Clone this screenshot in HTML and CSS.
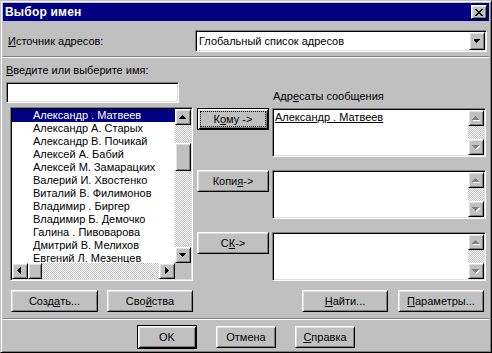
FILE: index.html
```html
<!DOCTYPE html>
<html lang="ru">
<head>
<meta charset="utf-8">
<title>Выбор имен</title>
<link rel="stylesheet" href="styles.css">
</head>
<body>
<div class="window">
  <div class="titlebar">
    <span class="title">Выбор имен</span>
    <div class="close raised">
      <svg width="8" height="7" viewBox="0 0 8 7" shape-rendering="crispEdges"><path fill="#000" d="M0 0h2v1H0zM6 0h2v1H6zM1 1h2v1H1zM5 1h2v1H5zM2 2h4v1H2zM3 3h2v1H3zM2 4h4v1H2zM1 5h2v1H1zM5 5h2v1H5zM0 6h2v1H0zM6 6h2v1H6z"/></svg>
    </div>
  </div>
  <div class="body">
    <div class="source-row">
      <span class="lbl"><u>И</u>сточник адресов:</span>
      <div class="combo sunken">
        <span class="combo-text">Глобальный список адресов</span>
        <div class="combo-btn raised">
          <svg width="16" height="16" viewBox="0 0 16 16" shape-rendering="crispEdges"><path fill="#000" d="M4 6H11V7H10V8H9V9H8V10H7V9H6V8H5V7H4z"/></svg>
        </div>
      </div>
    </div>
    <div class="sep"></div>
    <div class="main">
      <div class="col-left">
        <div class="lbl lbl-name"><u>В</u>ведите или выберите имя:</div>
        <div class="input sunken"></div>
        <div class="listbox sunken">
          <div class="lb-items">
            <div class="lb-row selected">Александр . Матвеев</div>
            <div class="lb-row">Александр А. Старых</div>
            <div class="lb-row">Александр В. Почикай</div>
            <div class="lb-row">Алексей А. Бабий</div>
            <div class="lb-row">Алексей М. Замарацких</div>
            <div class="lb-row">Валерий И. Хвостенко</div>
            <div class="lb-row">Виталий В. Филимонов</div>
            <div class="lb-row">Владимир . Биргер</div>
            <div class="lb-row">Владимир Б. Демочко</div>
            <div class="lb-row">Галина . Пивоварова</div>
            <div class="lb-row">Дмитрий В. Мелихов</div>
            <div class="lb-row">Евгений Л. Мезенцев</div>
          </div>
          <div class="vscroll">
            <div class="sb-btn raised"><svg width="14" height="14" viewBox="1 1 14 14" shape-rendering="crispEdges"><path fill="#000" d="M7 6h1v1h1v1h1v1h1v1H4V9h1V8h1V7h1z"/></svg></div>
            <div class="track v-track"><div class="thumb-v raised"></div></div>
            <div class="sb-btn raised"><svg width="14" height="14" viewBox="1 1 14 14" shape-rendering="crispEdges"><path fill="#000" d="M4 6H11V7H10V8H9V9H8V10H7V9H6V8H5V7H4z"/></svg></div>
          </div>
          <div class="hscroll">
            <div class="sb-btn raised"><svg width="14" height="14" viewBox="1 1 14 14" shape-rendering="crispEdges"><path fill="#000" d="M8 4h1v7H8v-1H7V9H6V8H5V7h1V6h1V5h1z"/></svg></div>
            <div class="thumb-h raised"></div>
            <div class="track h-track"></div>
            <div class="sb-btn raised"><svg width="14" height="14" viewBox="1 1 14 14" shape-rendering="crispEdges"><path fill="#000" d="M6 4h1v1h1v1h1v1h1v1H9v1H8v1H7v1H6z"/></svg></div>
          </div>
          <div class="corner"></div>
        </div>
      </div>
      <div class="col-mid">
        <div class="btn btn-default focused">К<u>о</u>му -&gt;</div>
        <div class="btn raised">Копи<u>я</u> -&gt;</div>
        <div class="btn raised">С<u>К</u> -&gt;</div>
      </div>
      <div class="col-right">
        <div class="lbl lbl-rcpt">Адр<u>е</u>саты сообщения</div>
        <div class="rbox sunken">
          <div class="rbox-text"><span class="resolved">Александр . Матвеев</span></div>
          <div class="vscroll dis">
            <div class="sb-btn raised"><svg width="14" height="14" viewBox="1 1 14 14" shape-rendering="crispEdges"><path fill="#fff" transform="translate(1 1)" d="M7 6h1v1h1v1h1v1h1v1H4V9h1V8h1V7h1z"/><path fill="#808080" d="M7 6h1v1h1v1h1v1h1v1H4V9h1V8h1V7h1z"/></svg></div>
            <div class="track"></div>
            <div class="sb-btn raised"><svg width="14" height="14" viewBox="1 1 14 14" shape-rendering="crispEdges"><path fill="#fff" transform="translate(1 1)" d="M4 6H11V7H10V8H9V9H8V10H7V9H6V8H5V7H4z"/><path fill="#808080" d="M4 6H11V7H10V8H9V9H8V10H7V9H6V8H5V7H4z"/></svg></div>
          </div>
        </div>
        <div class="rbox sunken">
          <div class="rbox-text"></div>
          <div class="vscroll dis">
            <div class="sb-btn raised"><svg width="14" height="14" viewBox="1 1 14 14" shape-rendering="crispEdges"><path fill="#fff" transform="translate(1 1)" d="M7 6h1v1h1v1h1v1h1v1H4V9h1V8h1V7h1z"/><path fill="#808080" d="M7 6h1v1h1v1h1v1h1v1H4V9h1V8h1V7h1z"/></svg></div>
            <div class="track"></div>
            <div class="sb-btn raised"><svg width="14" height="14" viewBox="1 1 14 14" shape-rendering="crispEdges"><path fill="#fff" transform="translate(1 1)" d="M4 6H11V7H10V8H9V9H8V10H7V9H6V8H5V7H4z"/><path fill="#808080" d="M4 6H11V7H10V8H9V9H8V10H7V9H6V8H5V7H4z"/></svg></div>
          </div>
        </div>
        <div class="rbox sunken">
          <div class="rbox-text"></div>
          <div class="vscroll dis">
            <div class="sb-btn raised"><svg width="14" height="14" viewBox="1 1 14 14" shape-rendering="crispEdges"><path fill="#fff" transform="translate(1 1)" d="M7 6h1v1h1v1h1v1h1v1H4V9h1V8h1V7h1z"/><path fill="#808080" d="M7 6h1v1h1v1h1v1h1v1H4V9h1V8h1V7h1z"/></svg></div>
            <div class="track"></div>
            <div class="sb-btn raised"><svg width="14" height="14" viewBox="1 1 14 14" shape-rendering="crispEdges"><path fill="#fff" transform="translate(1 1)" d="M4 6H11V7H10V8H9V9H8V10H7V9H6V8H5V7H4z"/><path fill="#808080" d="M4 6H11V7H10V8H9V9H8V10H7V9H6V8H5V7H4z"/></svg></div>
          </div>
        </div>
      </div>
    </div>
    <div class="action-row">
      <div class="btn raised w87">Созд<u>а</u>ть...</div>
      <div class="btn raised w86 ml9">Сво<u>й</u>ства</div>
      <div class="spacer"></div>
      <div class="btn raised w86"><u>Н</u>айти...</div>
      <div class="btn raised w86 ml10"><u>П</u>араметры...</div>
    </div>
    <div class="sep sep-bottom"></div>
    <div class="footer">
      <div class="btn btn-default ok">OK</div>
      <div class="btn raised w60">Отмена</div>
      <div class="btn raised w60"><u>С</u>правка</div>
    </div>
  </div>
</div>
</body>
</html>
```

FILE: styles.css
```css
* { box-sizing: border-box; }
html, body { margin: 0; padding: 0; }
body {
  width: 492px;
  height: 353px;
  overflow: hidden;
  background: #c0c0c0;
  font-family: "Liberation Sans", Arial, sans-serif;
  font-size: 11px;
  line-height: 13px;
  color: #000;
}
u { text-decoration: underline; text-underline-offset: 1px; }

.window {
  width: 492px;
  height: 353px;
  background: #c0c0c0;
  border: 1px solid;
  border-color: #c0c0c0 #000 #000 #c0c0c0;
  box-shadow: inset 1px 1px #fff, inset -1px -1px #808080;
  padding: 2px;
  display: flex;
  flex-direction: column;
}

.raised {
  background: #c0c0c0;
  border: 1px solid;
  border-color: #fff #000 #000 #fff;
  box-shadow: inset 1px 1px #dfdfdf, inset -1px -1px #808080;
}
.sunken {
  background: #fff;
  border: 1px solid;
  border-color: #808080 #fff #fff #808080;
  box-shadow: inset 1px 1px #000, inset -1px -1px #dfdfdf;
  padding: 1px;
}

.titlebar {
  height: 18px;
  flex: none;
  background: #000080;
  color: #fff;
  display: flex;
  align-items: center;
  justify-content: space-between;
  padding: 0 2px 0 2px;
}
.title { font-weight: bold; font-size: 12px; letter-spacing: 0.2px; }
.close {
  width: 16px;
  height: 14px;
  display: flex;
  align-items: center;
  justify-content: center;
  padding-top: 1px;
}

.body { flex: 1; display: flex; flex-direction: column; }

.source-row {
  margin-top: 9px;
  height: 22px;
  display: flex;
  align-items: center;
  justify-content: space-between;
  padding: 0 2px 0 5px;
}
.combo {
  width: 292px;
  height: 22px;
  display: flex;
  align-items: center;
}
.combo-text { flex: 1; padding-left: 2px; white-space: nowrap; }
.combo-btn {
  width: 16px;
  height: 18px;
  display: flex;
  align-items: center;
  justify-content: center;
}

.sep {
  height: 2px;
  flex: none;
  border-top: 1px solid #808080;
  border-bottom: 1px solid #fff;
  margin-top: 4px;
}

.main { display: flex; height: 223px; flex: none; }
.col-left { width: 190px; padding-left: 3px; display: flex; flex-direction: column; }
.lbl-name { margin-top: 6px; white-space: nowrap; }
.input { width: 173px; height: 21px; margin-top: 5px; }

.listbox {
  width: 183px;
  height: 174px;
  margin: 4px 0 0 4px;
  display: grid;
  grid-template-columns: 1fr 16px;
  grid-template-rows: 1fr 16px;
  overflow: hidden;
}
.lb-items { overflow: hidden; }
.lb-row { height: 13px; padding-left: 21px; white-space: nowrap; }
.lb-row.selected { background: #000080; color: #fff; }

.vscroll { display: flex; flex-direction: column; }
.hscroll { display: flex; }
.sb-btn {
  width: 16px;
  height: 16px;
  flex: none;
  display: flex;
  align-items: center;
  justify-content: center;
}
.track {
  flex: 1;
  background: repeating-conic-gradient(#c0c0c0 0 25%, #fff 0 50%) 0 0 / 2px 2px;
}
.thumb-v { width: 16px; height: 28px; margin-top: 18px; }
.thumb-h { width: 14px; height: 16px; flex: none; }
.corner { background: #c0c0c0; }

.col-mid {
  margin-left: 4px;
  width: 72px;
  padding-top: 50px;
  display: flex;
  flex-direction: column;
  gap: 40px;
}
.btn {
  height: 22px;
  display: flex;
  align-items: center;
  justify-content: center;
  white-space: nowrap;
  flex: none;
}
.btn-default {
  position: relative;
  background: #c0c0c0;
  border: 1px solid #000;
  box-shadow: inset 1px 1px #fff, inset -1px -1px #000, inset 2px 2px #dfdfdf, inset -2px -2px #808080;
}
.focused::after {
  content: "";
  position: absolute;
  inset: 2px;
  border: 1px dotted #000;
}

.col-right { margin-left: 3px; width: 214px; display: flex; flex-direction: column; }
.lbl-rcpt { margin-top: 32px; padding-left: 1px; }
.rbox {
  height: 49px;
  margin-top: 5px;
  display: flex;
}
.rbox + .rbox { margin-top: 13px; }
.rbox-text { flex: 1; padding: 1px 0 0 1px; white-space: nowrap; }
.resolved { text-decoration: underline; text-underline-offset: 1px; }

.action-row {
  margin-top: 9px;
  height: 22px;
  flex: none;
  display: flex;
  padding: 0 5px 0 8px;
}
.spacer { flex: 1; }
.w87 { width: 87px; }
.w86 { width: 86px; }
.w60 { width: 60px; }
.ml9 { margin-left: 9px; }
.ml10 { margin-left: 10px; }

.sep-bottom { margin-top: 6px; }

.footer {
  margin-top: 3px;
  height: 28px;
  flex: none;
  display: flex;
  align-items: center;
  justify-content: center;
  gap: 19px;
}
.ok { width: 60px; height: 24px; }
```
